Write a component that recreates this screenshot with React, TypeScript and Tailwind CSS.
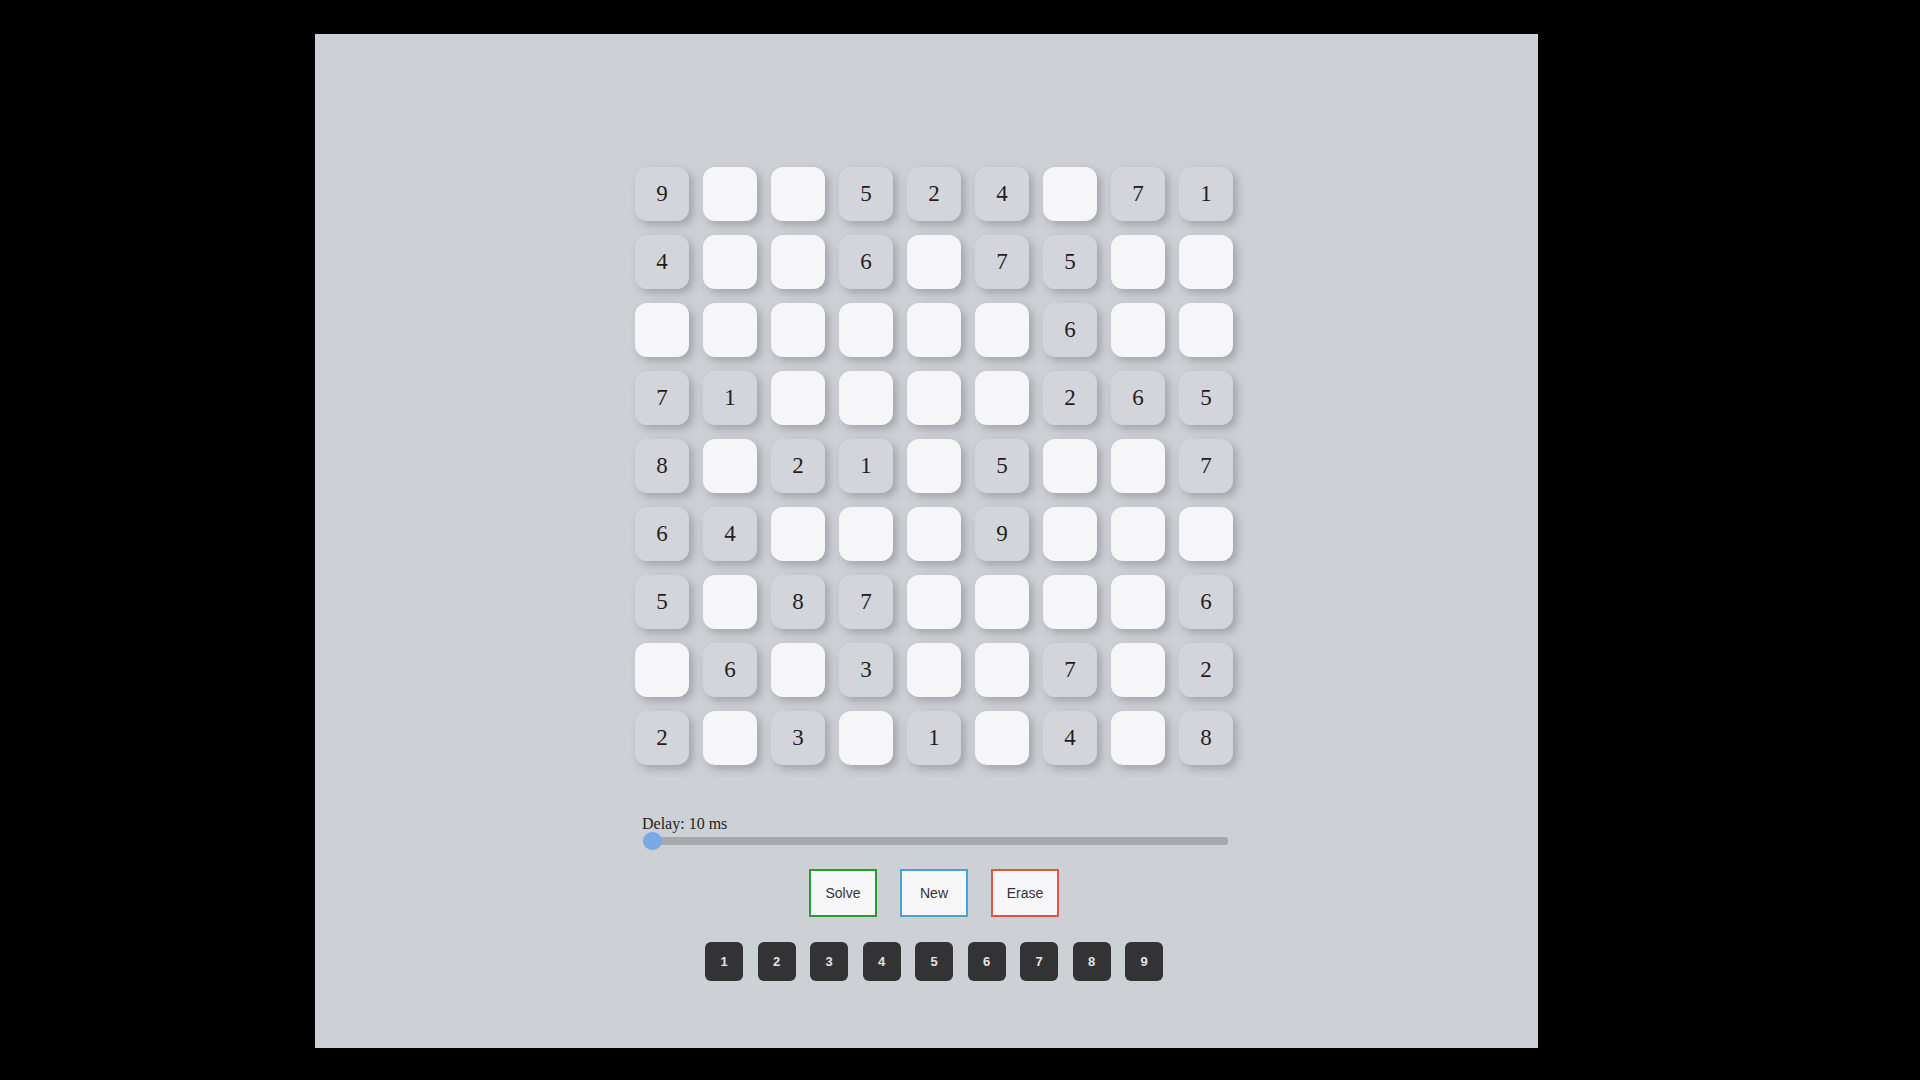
const BOARD = [
  [9, 0, 0, 5, 2, 4, 0, 7, 1],
  [4, 0, 0, 6, 0, 7, 5, 0, 0],
  [0, 0, 0, 0, 0, 0, 6, 0, 0],
  [7, 1, 0, 0, 0, 0, 2, 6, 5],
  [8, 0, 2, 1, 0, 5, 0, 0, 7],
  [6, 4, 0, 0, 0, 9, 0, 0, 0],
  [5, 0, 8, 7, 0, 0, 0, 0, 6],
  [0, 6, 0, 3, 0, 0, 7, 0, 2],
  [2, 0, 3, 0, 1, 0, 4, 0, 8],
];

const ACTIONS = [
  { label: 'Solve', border: 'border-[#2b9b2f]' },
  { label: 'New', border: 'border-[#45a3d6]' },
  { label: 'Erase', border: 'border-[#e2553f]' },
];

function Cell({ value }: { value: number }) {
  if (!value) {
    return (
      <div className="w-[54px] h-[54px] rounded-[12px] bg-[#f6f6f8] shadow-[4px_4px_9px_rgba(60,62,70,0.3)]" />
    );
  }
  return (
    <div className="w-[54px] h-[54px] rounded-[12px] bg-[#d3d5da] shadow-[4px_4px_9px_rgba(60,62,70,0.3)] flex items-center justify-center font-['Liberation_Serif',serif] text-[23px] text-[#1f1f1f]">
      {value}
    </div>
  );
}

export default function App() {
  return (
    <div className="w-[1920px] h-[1080px] bg-black pt-[34px] pl-[315px]">
      <div className="w-[1223px] h-[1014px] bg-[#cdd0d5] pt-[133px] pl-[320px]">
        <div className="w-[598px] flex flex-col">
          {/* board */}
          <div className="grid grid-cols-[repeat(9,54px)] gap-[14px]">
            {BOARD.flat().map((v, i) => (
              <Cell key={i} value={v} />
            ))}
          </div>

          {/* delay slider */}
          <div className="mt-[50px] ml-[7px] leading-[18px] text-[16px] text-[#222] font-['Liberation_Serif',serif]">
            Delay: 10 ms
          </div>
          <div className="relative ml-[8px] w-[585px] h-[18px] -mt-[1px] flex items-center">
            <div className="w-full h-[8px] rounded-[3px] bg-[#a8a9ad]" />
            <div className="absolute left-0 top-0 w-[19px] h-[18px] rounded-full bg-[#78a9e6]" />
          </div>

          {/* actions */}
          <div className="mt-[19px] flex justify-center gap-[23px]">
            {ACTIONS.map((a) => (
              <button
                key={a.label}
                className={`w-[68px] h-[48px] border-2 ${a.border} bg-[#f7f7f9] text-[14px] text-[#333] font-['Liberation_Sans',Arial,sans-serif]`}
              >
                {a.label}
              </button>
            ))}
          </div>

          {/* number pad */}
          <div className="mt-[25px] flex justify-center gap-[14.5px]">
            {[1, 2, 3, 4, 5, 6, 7, 8, 9].map((n) => (
              <button
                key={n}
                className="w-[38px] h-[39px] rounded-[6px] bg-[#333335] text-[13px] font-bold text-[#e4e4e4] font-['Liberation_Sans',Arial,sans-serif]"
              >
                {n}
              </button>
            ))}
          </div>
        </div>
      </div>
    </div>
  );
}
